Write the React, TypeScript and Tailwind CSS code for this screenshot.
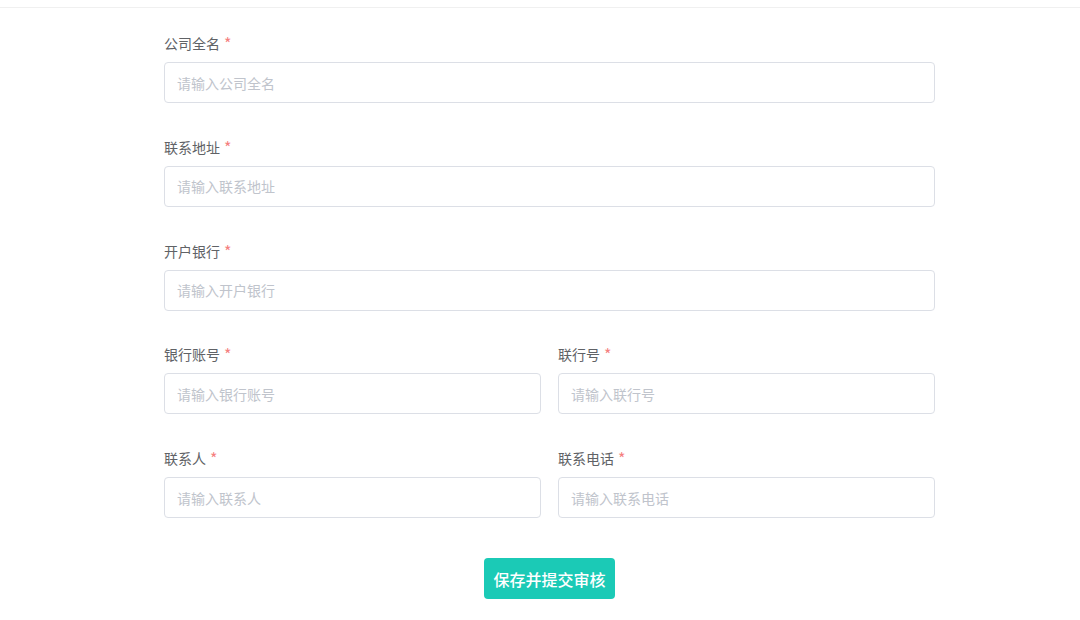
import React from 'react';

type Field = { label: string; placeholder: string };

function FormField({ label, placeholder }: Field) {
  return (
    <div className="flex flex-col">
      <label className="flex h-5 items-center text-[14px] leading-5 text-[#606266]">
        {label}
        <span className="ml-[4px] text-[16px] text-[#f57f7f]">*</span>
      </label>
      <input
        type="text"
        placeholder={placeholder}
        className="mt-[9px] h-[41px] w-full rounded-[4px] border border-[#dcdfe6] bg-white px-[12px] text-[14px] text-[#606266] outline-none placeholder:text-[#c0c4cc]"
      />
    </div>
  );
}

export default function App() {
  return (
    <div
      className="min-h-[620px] w-full bg-white"
      style={{ fontFamily: '"Noto Sans CJK SC", "Liberation Sans", sans-serif' }}
    >
      <div className="h-[8px] border-b border-[#f0f0f0]" />
      <div className="ml-[164px] flex w-[771px] flex-col pt-[25px]">
        <div className="flex flex-col gap-[33.75px]">
          <FormField label="公司全名" placeholder="请输入公司全名" />
          <FormField label="联系地址" placeholder="请输入联系地址" />
          <FormField label="开户银行" placeholder="请输入开户银行" />
          <div className="grid grid-cols-2 gap-[17px]">
            <FormField label="银行账号" placeholder="请输入银行账号" />
            <FormField label="联行号" placeholder="请输入联行号" />
          </div>
          <div className="grid grid-cols-2 gap-[17px]">
            <FormField label="联系人" placeholder="请输入联系人" />
            <FormField label="联系电话" placeholder="请输入联系电话" />
          </div>
        </div>
        <div className="mt-[40px] flex justify-center">
          <button className="h-[41px] w-[131px] rounded-[4px] bg-[#1bcab6] text-[16px] font-medium text-white">
            保存并提交审核
          </button>
        </div>
      </div>
    </div>
  );
}
